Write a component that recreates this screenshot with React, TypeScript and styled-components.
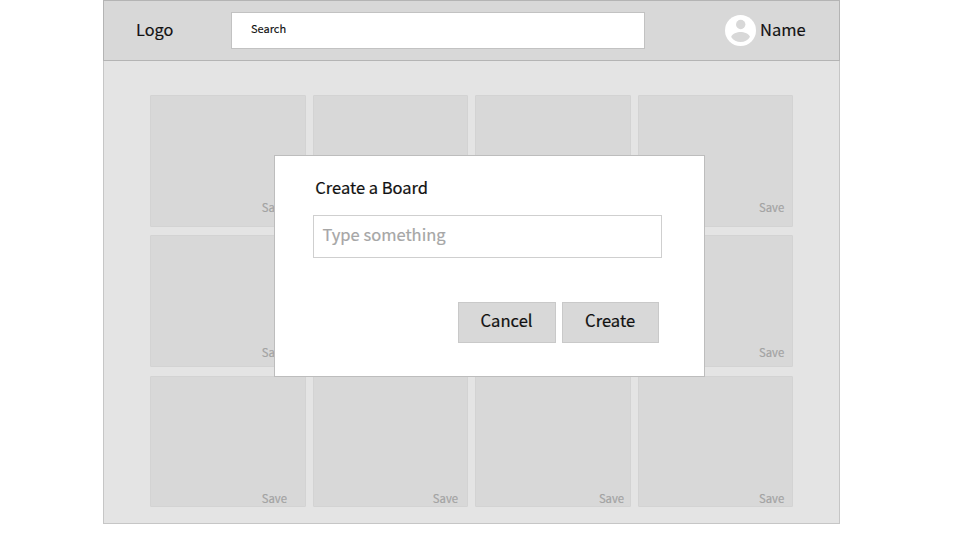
import React from "react";
import styled, { createGlobalStyle } from "styled-components";

const GlobalStyle = createGlobalStyle`
  * { box-sizing: border-box; }
  body {
    margin: 0;
    background: #fff;
    color: #111;
    font-family: "Noto Sans CJK SC", "Noto Sans", sans-serif;
    overflow: hidden;
  }
`;

const Page = styled.div`
  width: 960px;
  height: 540px;
  padding-left: 103px;
`;

const Window = styled.main`
  position: relative;
  width: 737px;
  height: 524px;
  background: #e4e4e4;
  border: 1px solid #c6c6c6;
`;

const Header = styled.header`
  display: flex;
  align-items: center;
  height: 61px;
  margin: -1px -1px 0;
  padding: 0 0 0 32px;
  background: #d8d8d8;
  border: 1px solid #b4b4b4;
`;

const Logo = styled.div`
  flex: none;
  width: 95px;
  padding-bottom: 4px;
  font-size: 16.3px;
  line-height: 24px;
  -webkit-text-stroke: 0.15px;
`;

const SearchBox = styled.div`
  flex: none;
  width: 414.4px;
  height: 37px;
  padding: 5px 19px 0;
  margin: 0 79.2px 1px 0;
  background: #fff;
  border: 1px solid #c2c2c2;
  font-size: 11px;
  line-height: 20px;
  -webkit-text-stroke: 0.15px;
`;

const User = styled.div`
  flex: none;
  display: flex;
  align-items: center;
  gap: 4.4px;
`;

const UserName = styled.span`
  padding-bottom: 4px;
  font-size: 16.5px;
  line-height: 24px;
  -webkit-text-stroke: 0.15px;
`;

const Board = styled.section`
  display: grid;
  grid-template-columns: repeat(4, 155.5px);
  grid-auto-rows: 131.5px;
  gap: 8.9px 7.1px;
  padding: 34px 46px 0;
`;

const Card = styled.article<{ $right: number; $bottom: number }>`
  display: flex;
  justify-content: flex-end;
  align-items: flex-end;
  padding: 0 ${(p) => p.$right}px ${(p) => p.$bottom}px 0;
  background: #d8d8d8;
  border: 1px solid #d3d3d3;
  border-radius: 1px;
`;

const Save = styled.span`
  color: #a3a3a3;
  font-size: 11.3px;
  line-height: 16px;
  -webkit-text-stroke: 0.2px;
`;

const Dialog = styled.div`
  position: absolute;
  left: 170px;
  top: 154px;
  width: 431px;
  height: 222px;
  padding: 19px 42px 0 38px;
  background: #fff;
  border: 1px solid #bdbdbd;
`;

const Title = styled.h1`
  margin: 0 0 15px 2.3px;
  font-size: 16.5px;
  font-weight: 400;
  line-height: 25px;
  -webkit-text-stroke: 0.2px;
`;

const Field = styled.div`
  height: 43px;
  padding: 6px 8.5px;
  border: 1px solid #cfcfcf;
  color: #a6a6a6;
  font-size: 16.5px;
  line-height: 25px;
  -webkit-text-stroke: 0.2px;
`;

const Actions = styled.div`
  display: flex;
  justify-content: flex-end;
  gap: 6.4px;
  padding: 44px 2.8px 0 0;
`;

const Button = styled.button`
  width: 97.2px;
  height: 41px;
  padding: 0 1px 4px 0;
  background: #d8d8d8;
  border: 1px solid #c9c9c9;
  border-radius: 0;
  color: #111;
  font: inherit;
  font-size: 16.6px;
  line-height: 25px;
  -webkit-text-stroke: 0.2px;
`;

const rightInsets = [17.6, 9.1, 5.6, 8.1];
const bottomInsets = [10.7, 5.5, 0.1];

const Avatar = () => (
  <svg width="31" height="31" viewBox="0 0 31 31" aria-hidden="true">
    <circle cx="15.5" cy="15.5" r="15.5" fill="#fff" />
    <circle cx="15.7" cy="9.5" r="4.7" fill="#d8d8d8" />
    <path d="M6.2 22C6.4 18.9 12.5 17 15.6 17s9.2 1.9 9.3 5C22.8 25.2 19.4 27 15.6 27S8.2 25.2 6.2 22Z" fill="#d8d8d8" />
  </svg>
);

export default function App() {
  return (
    <Page>
      <GlobalStyle />
      <Window>
        <Header>
          <Logo>Logo</Logo>
          <SearchBox>Search</SearchBox>
          <User>
            <Avatar />
            <UserName>Name</UserName>
          </User>
        </Header>
        <Board>
          {bottomInsets.map((bottom) =>
            rightInsets.map((right) => (
              <Card key={`${bottom}-${right}`} $right={right} $bottom={bottom}>
                <Save>Save</Save>
              </Card>
            )),
          )}
        </Board>
        <Dialog role="dialog" aria-label="Create a Board">
          <Title>Create a Board</Title>
          <Field>Type something</Field>
          <Actions>
            <Button>Cancel</Button>
            <Button>Create</Button>
          </Actions>
        </Dialog>
      </Window>
    </Page>
  );
}
